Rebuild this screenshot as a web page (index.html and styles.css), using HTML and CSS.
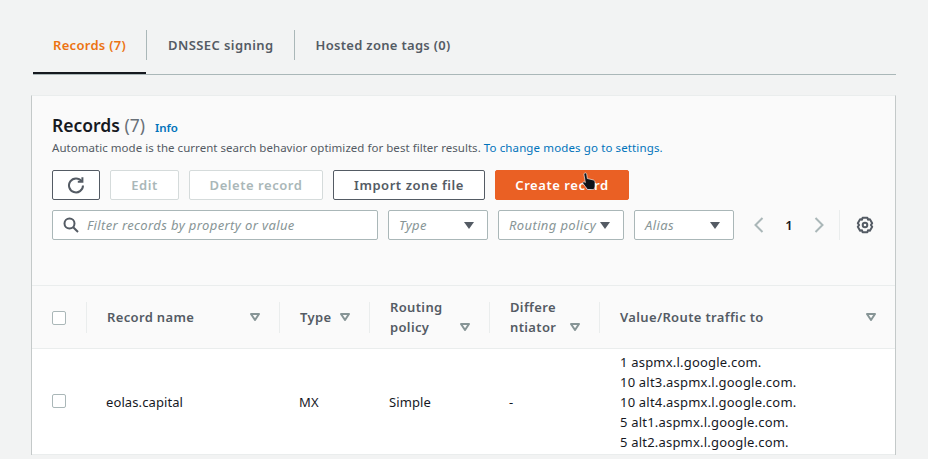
FILE: index.html
```html
<!DOCTYPE html>
<html lang="en">
  <head>
    <meta charset="UTF-8" />
    <meta name="viewport" content="width=device-width, initial-scale=1.0" />
    <title>Records</title>
    <link rel="stylesheet" href="styles.css">
  </head>
  <body>
    <div class="tabs">
      <a class="tab active">Records (7)</a>
      <a class="tab">DNSSEC signing</a>
      <a class="tab">Hosted zone tags (0)</a>
    </div>

    <div class="card">
      <div class="card-head">
        <div class="title-row">
          <h2>Records <span class="count">(7)</span></h2>
          <a class="info">Info</a>
        </div>
        <p class="desc">Automatic mode is the current search behavior optimized for best filter results. <a>To change modes go to settings.</a></p>

        <div class="actions">
          <button class="btn refresh">
            <svg width="18" height="18" viewBox="0 0 18 18" fill="none" stroke="#545b64" stroke-width="2">
              <path d="M14.6 5.2A7 7 0 1 0 16 9.5" />
              <path d="M15.4 1.2v4.6h-4.6" />
            </svg>
          </button>
          <button class="btn disabled edit">Edit</button>
          <button class="btn disabled delete">Delete record</button>
          <button class="btn import">Import zone file</button>
          <button class="btn primary">Create record</button>
          <svg class="cursor" width="16" height="20" viewBox="0 0 16 20">
            <path d="M3.5 1.2c1-.6 2 0 2.200 1l.6 4.300 5.700 1.400c1.200.3 2 1.200 2 2.400v3.700c0 1.500-.6 2.500-1.500 3.500H6.500L2 11.500c-.7-.9.300-2.200 1.500-1.500l.9.6L3 2.700c-.1-.6 0-1.200.5-1.500z" fill="#0f1419" stroke="#fff" stroke-width=".6" />
          </svg>
        </div>

        <div class="filters">
          <div class="field search">
            <svg width="16" height="16" viewBox="0 0 16 16" fill="none" stroke="#545b64" stroke-width="2">
              <circle cx="6.500" cy="6.500" r="5" />
              <path d="M10.200 10.200l4.800 4.800" />
            </svg>
            <span>Filter records by property or value</span>
          </div>
          <div class="field select type"><span>Type</span><i class="caret"></i></div>
          <div class="field select routing"><span>Routing policy</span><i class="caret"></i></div>
          <div class="field select alias"><span>Alias</span><i class="caret"></i></div>
          <div class="pager">
            <svg width="12" height="16" viewBox="0 0 12 16" fill="none" stroke="#aab7b8" stroke-width="2"><path d="M9.500 1L2.500 8l7 7" /></svg>
            <span class="page">1</span>
            <svg width="12" height="16" viewBox="0 0 12 16" fill="none" stroke="#aab7b8" stroke-width="2"><path d="M2.500 1l7 7-7 7" /></svg>
          </div>
          <div class="settings">
            <svg width="18" height="18" viewBox="0 0 18 18" fill="none" stroke="#545b64" stroke-width="2">
              <circle cx="9" cy="9" r="2.300" />
              <path d="M6.600 1.800h4.800l.6 1.900 1.900-.4 2.300 3.900-1.300 1.800 1.300 1.800-2.300 3.900-1.900-.4-.6 1.900H6.600L6 14.300l-1.900.4-2.300-3.900L3.100 9 1.800 7.200l2.300-3.900 1.900.4z" stroke-linejoin="round" />
            </svg>
          </div>
        </div>
      </div>

      <div class="grid thead">
        <div class="th check"><i class="box"></i></div>
        <div class="th"><span>Record name</span><svg class="sort" width="10" height="8" viewBox="0 0 10 8"><path d="M1 1h8L5 7z" fill="none" stroke="#879596" stroke-width="2" stroke-linejoin="round" /></svg></div>
        <div class="th"><span>Type</span><svg class="sort" width="10" height="8" viewBox="0 0 10 8"><path d="M1 1h8L5 7z" fill="none" stroke="#879596" stroke-width="2" stroke-linejoin="round" /></svg></div>
        <div class="th low"><span>Routing policy</span><svg class="sort" width="10" height="8" viewBox="0 0 10 8"><path d="M1 1h8L5 7z" fill="none" stroke="#879596" stroke-width="2" stroke-linejoin="round" /></svg></div>
        <div class="th low"><span>Differe ntiator</span><svg class="sort" width="10" height="8" viewBox="0 0 10 8"><path d="M1 1h8L5 7z" fill="none" stroke="#879596" stroke-width="2" stroke-linejoin="round" /></svg></div>
        <div class="th"><span>Value/Route traffic to</span><svg class="sort" width="10" height="8" viewBox="0 0 10 8"><path d="M1 1h8L5 7z" fill="none" stroke="#879596" stroke-width="2" stroke-linejoin="round" /></svg></div>
      </div>

      <div class="grid row">
        <div class="td check"><i class="box"></i></div>
        <div class="td">eolas.capital</div>
        <div class="td">MX</div>
        <div class="td">Simple</div>
        <div class="td">-</div>
        <div class="td value">
          1 aspmx.l.google.com.<br />
          10 alt3.aspmx.l.google.com.<br />
          10 alt4.aspmx.l.google.com.<br />
          5 alt1.aspmx.l.google.com.<br />
          5 alt2.aspmx.l.google.com.
        </div>
      </div>
    </div>
  </body>
</html>
```

FILE: styles.css
```css
html,
body {
  height: 459px;
  overflow: hidden;
}
body {
  font-family: "Noto Sans", Arial, sans-serif;
  font-size: 13px;
  color: #16191f;
  background-color: #f2f3f3;
  margin: 0;
  padding: 0;
}

/* tabs */
.tabs {
  display: flex;
  margin: 30px 32px 0 33px;
  height: 44px;
  border-bottom: 1px solid #aab7b8;
}
.tab {
  position: relative;
  display: block;
  height: 30px;
  line-height: 30px;
  padding: 0 20px 0 21px;
  font-weight: 600;
  letter-spacing: 0.42px;
  color: #545b64;
  border-right: 1px solid #aab7b8;
}
.tab:last-child {
  border-right: none;
  letter-spacing: 0.3px;
}
.tab.active {
  padding: 0 20px;
  letter-spacing: 0.3px;
  color: #ec7211;
}
.tab.active::after {
  content: "";
  position: absolute;
  left: 0;
  right: 0;
  top: 42px;
  height: 2px;
  background-color: #16191f;
}

/* card */
.card {
  margin: 20px 32px 0 31px;
  background-color: #fff;
  border-left: 1px solid #c4c9c9;
  border-right: 1px solid #c4c9c9;
  border-top: 1px solid #eaeded;
}
.card-head {
  height: 189px;
  padding: 0 0 0 20px;
  background-color: #fafafa;
  border-bottom: 1px solid #eaeded;
}
.title-row {
  display: flex;
  align-items: baseline;
  padding-top: 16px;
  height: 26px;
}
h2 {
  margin: 0;
  font-size: 17.500px;
  line-height: 26px;
  font-weight: 600;
  color: #16191f;
}
.count {
  font-weight: 400;
  color: #687078;
}
.info {
  margin-left: 10px;
  font-size: 11.500px;
  font-weight: 600;
  color: #0073bb;
}
.desc {
  margin: 2px 0 0;
  font-size: 11.500px;
  line-height: 16px;
  letter-spacing: 0.035px;
  color: #545b64;
}
.desc a {
  letter-spacing: 0.12px;
  color: #0073bb;
}

/* buttons */
.actions {
  position: relative;
  display: flex;
  gap: 10px;
  margin-top: 14px;
}
.btn {
  height: 30px;
  padding: 0;
  font-family: inherit;
  font-size: 13px;
  font-weight: 600;
  letter-spacing: 0.55px;
  border: 1px solid #545b64;
  border-radius: 2px;
  background-color: #fff;
  color: #545b64;
  cursor: pointer;
}
.refresh {
  width: 48px;
  display: flex;
  align-items: center;
  justify-content: center;
}
.edit {
  width: 69px;
}
.delete {
  width: 134px;
}
.import {
  width: 152px;
}
.disabled {
  border-color: #d5dbdb;
  color: #aab7b8;
}
.primary {
  width: 134px;
  border-color: #ea6024;
  background-color: #ea6024;
  color: #fff;
}
.cursor {
  position: absolute;
  left: 529px;
  top: 2px;
}

/* filter row */
.filters {
  display: flex;
  align-items: center;
  gap: 10px;
  margin-top: 10px;
}
.field {
  display: flex;
  align-items: center;
  height: 30px;
  box-sizing: border-box;
  background-color: #fff;
  border: 1px solid #aab7b8;
  border-radius: 2px;
  font-style: italic;
  letter-spacing: 0.38px;
  color: #879596;
}
.search {
  width: 326px;
  padding-left: 10px;
  gap: 8px;
}
.select {
  padding: 0 13px 0 10px;
  justify-content: space-between;
}
.type {
  width: 100px;
}
.routing {
  width: 126px;
}
.alias {
  width: 100px;
}
.caret {
  width: 0;
  height: 0;
  border-left: 5px solid transparent;
  border-right: 5px solid transparent;
  border-top: 7px solid #545b64;
}
.pager {
  display: flex;
  align-items: center;
  margin-left: 9px;
  width: 72px;
  justify-content: space-between;
}
.page {
  font-weight: 600;
  color: #16191f;
}
.settings {
  display: flex;
  align-items: center;
  height: 30px;
  margin-left: 4px;
  padding-left: 16px;
  border-left: 1px solid #eaeded;
}

/* table */
.grid {
  display: grid;
  grid-template-columns: 54px 193px 90px 120px 110px 296px;
}
.thead {
  height: 62px;
  background-color: #fafafa;
  border-bottom: 1px solid #eaeded;
}
.th {
  display: flex;
  align-items: center;
  justify-content: space-between;
  box-sizing: border-box;
  height: 31px;
  margin-top: 16px;
  padding: 0 19px 2px 20px;
  border-left: 1px solid #eaeded;
  font-weight: 600;
  line-height: 20px;
  letter-spacing: 0.35px;
  color: #545b64;
}
.th span {
  display: block;
}
.th.low span {
  width: 60px;
}
.th.check {
  border-left: none;
  padding-right: 0;
}
.check {
  padding: 0 0 0 20px;
  display: flex;
  align-items: center;
}
.box {
  display: block;
  box-sizing: border-box;
  width: 14px;
  height: 14px;
  border: 1px solid #aab7b8;
  border-radius: 2px;
  background-color: #fff;
}
.low .sort {
  margin-top: 20px;
}
.row {
  height: 105px;
  border-bottom: 1px solid #eaeded;
}
.td {
  display: flex;
  align-items: center;
  padding-left: 20px;
  line-height: 20px;
  letter-spacing: 0.1px;
}
.td.check {
  padding-bottom: 2px;
}
.td.value {
  display: block;
  padding-left: 21px;
  padding-top: 3px;
  letter-spacing: 0.2px;
}
```
